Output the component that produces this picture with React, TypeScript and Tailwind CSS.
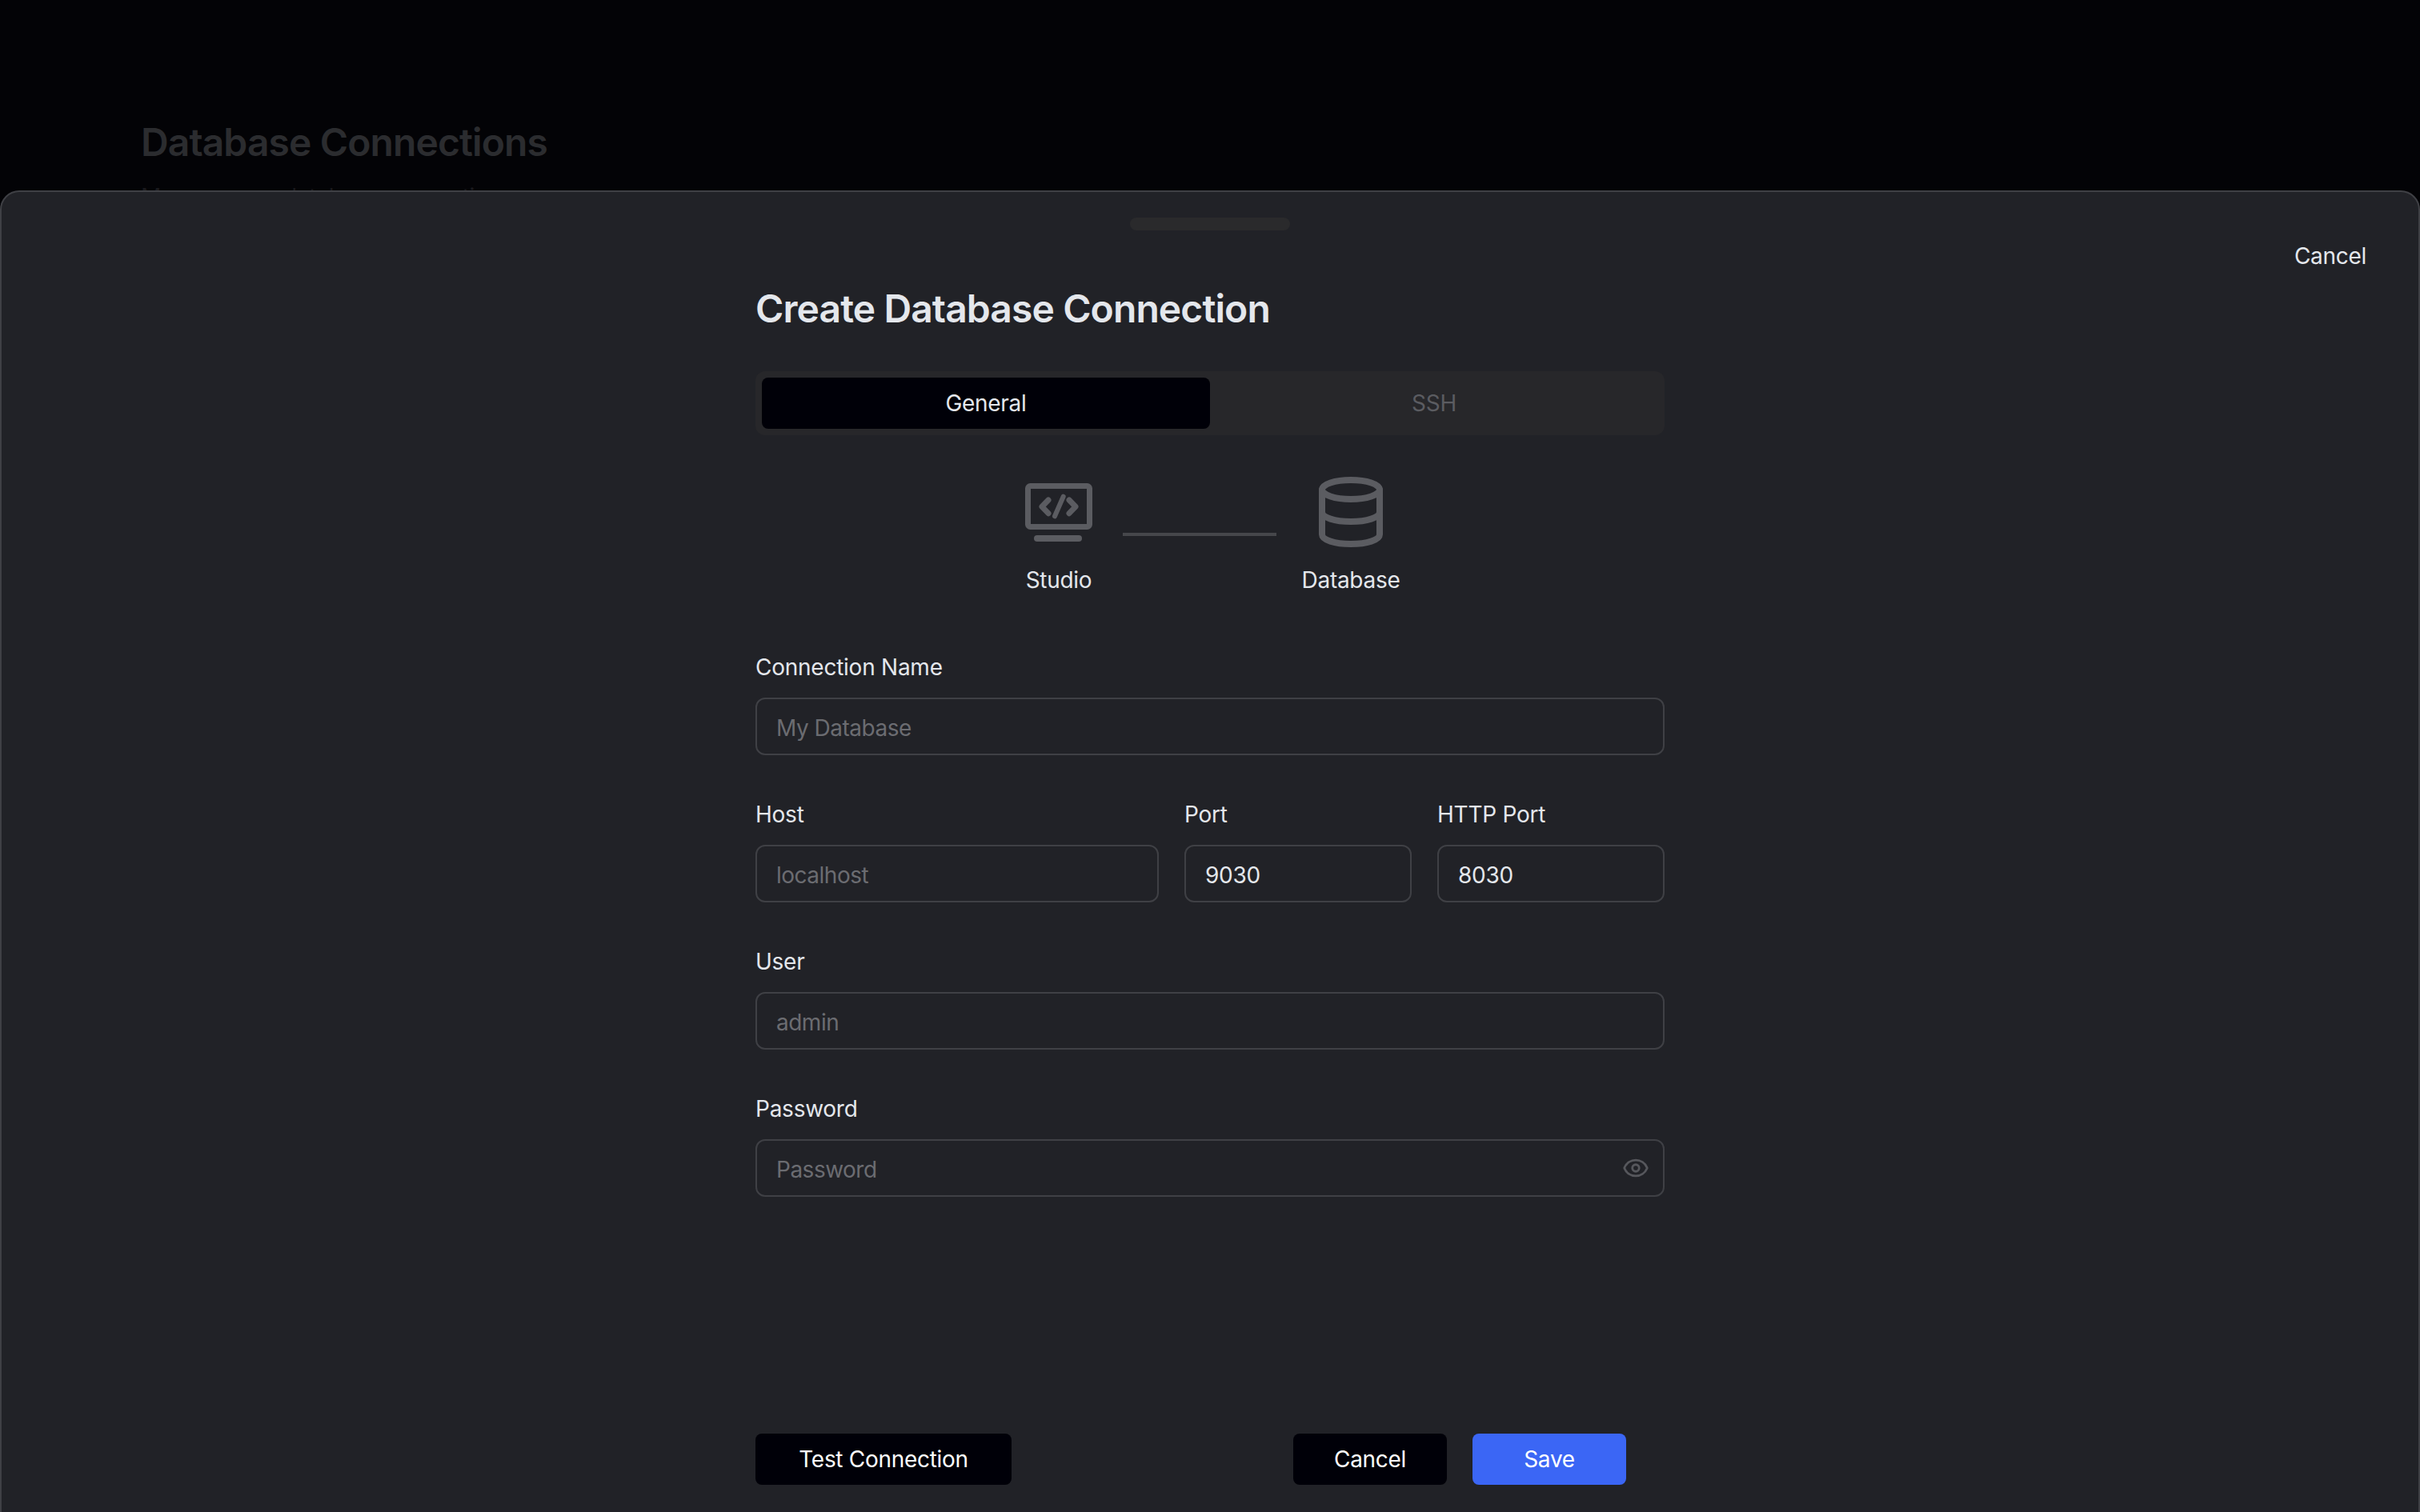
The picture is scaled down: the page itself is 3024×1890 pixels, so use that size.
import { Eye } from "lucide-react";

const inter = "font-['Inter',sans-serif]";

const Field = ({
  label,
  placeholder,
  value,
  className,
}: {
  label: string;
  placeholder?: string;
  value?: string;
  className?: string;
}) => (
  <div className={className}>
    <div className="h-10 mb-4 text-[28px] leading-[36px] tracking-[-0.25px] text-[#e4e7ec]">{label}</div>
    <div className="relative h-[72px] rounded-xl border-2 border-[#3f4045] px-6 pt-1 flex items-center text-[28px]">
      {value ? (
        <span className="text-[#e4e7ec] tracking-[-0.3px]">{value}</span>
      ) : (
        <span className="text-[#6b6c71] tracking-[-0.5px]">{placeholder}</span>
      )}
      {label === "Password" && (
        <Eye className="absolute right-[17px] top-[17px] w-[34px] h-[34px] text-[#56575c]" strokeWidth={2} />
      )}
    </div>
  </div>
);

const StudioIcon = () => (
  <svg width="84" height="80" viewBox="0 0 84 80" fill="none" stroke="#5b5c61" strokeWidth="7" strokeLinecap="round" strokeLinejoin="round">
    <rect x="3.5" y="3.5" width="77" height="51" rx="3" />
    <path d="M29 21L21 29.3L29 37.7" />
    <path d="M55 21L63 29.3L55 37.7" />
    <path d="M47.7 16.7L37 41.3" strokeWidth="6" />
    <path d="M15 69H67" strokeWidth="8" />
  </svg>
);

const DatabaseIcon = () => (
  <svg width="80" height="88" viewBox="0 0 80 88" fill="none" stroke="#5b5c61" strokeWidth="8" strokeLinecap="round" strokeLinejoin="round">
    <ellipse cx="40" cy="16" rx="36" ry="12" />
    <path d="M4 16V72C4 79 20 84 40 84C60 84 76 79 76 72V16" />
    <path d="M4 44C4 51 20 56 40 56C60 56 76 51 76 44" />
  </svg>
);

export default function App() {
  return (
    <div className={`relative w-[3024px] h-[1890px] overflow-hidden bg-[#030306] ${inter}`}>
      {/* page behind the sheet */}
      <div className="pl-[176px] pt-[148px]">
        <h1 className="text-[48px] leading-[60px] font-semibold tracking-[-0.9px] text-[#2b2c2f]">Database Connections</h1>
        <p className="mt-[18px] text-[28px] leading-10 tracking-[-0.3px] text-[#1a1a1d]">Manage your database connections</p>
      </div>

      {/* sheet */}
      <div className="absolute left-0 right-0 top-[238px] bottom-0 rounded-t-[24px] border-2 border-b-0 border-[#3f4045] bg-[#212227]">
        <div className="absolute left-[1410px] top-[32px] w-[200px] h-4 rounded-lg bg-[#2a2a2c]" />
        <div className="absolute right-[65px] top-[60px] text-[28px] leading-10 tracking-[-0.3px] text-[#e4e7ec]">Cancel</div>

        <div className="w-[1136px] ml-[942px] pt-[116px]">
          <h2 className="text-[48px] leading-[60px] font-semibold tracking-[-0.9px] text-[#e4e7ec]">Create Database Connection</h2>

          <div className="mt-12 h-20 p-2 rounded-xl bg-[#27272a] flex text-[28px] tracking-[-0.3px]">
            <div className="w-[560px] rounded-lg bg-[#000008] text-[#e4e7ec] flex items-center justify-center">General</div>
            <div className="w-[560px] text-[#5b5c61] flex items-center justify-center">SSH</div>
          </div>

          <div className="mt-[52px] flex items-start pl-[337px] text-[28px] leading-10 tracking-[-0.3px] text-[#e4e7ec]">
            <div className="w-[84px] flex flex-col items-center">
              <div className="mt-2">
                <StudioIcon />
              </div>
              <div className="mt-[21px]">Studio</div>
            </div>
            <div className="ml-[38px] mt-[70px] w-[192px] h-1 bg-[#46474b]" />
            <div className="ml-[53px] w-[80px] flex flex-col items-center">
              <DatabaseIcon />
              <div className="mt-[21px] whitespace-nowrap">Database</div>
            </div>
          </div>

          <div className="mt-[71px] flex flex-col gap-[56px]">
            <Field label="Connection Name" placeholder="My Database" />
            <div className="flex gap-8">
              <Field label="Host" placeholder="localhost" className="w-[504px]" />
              <Field label="Port" value="9030" className="w-[284px]" />
              <Field label="HTTP Port" value="8030" className="w-[284px]" />
            </div>
            <Field label="User" placeholder="admin" />
            <Field label="Password" placeholder="Password" />
          </div>

          <div className="mt-[296px] pr-12 flex justify-between text-[28px] tracking-[-0.3px] text-white">
            <div className="w-[320px] h-16 rounded-lg bg-[#000008] flex items-center justify-center">Test Connection</div>
            <div className="flex gap-8">
              <div className="w-[192px] h-16 rounded-lg bg-[#000008] flex items-center justify-center">Cancel</div>
              <div className="w-[192px] h-16 rounded-lg bg-[#3b66f5] flex items-center justify-center">Save</div>
            </div>
          </div>
        </div>
      </div>
    </div>
  );
}
